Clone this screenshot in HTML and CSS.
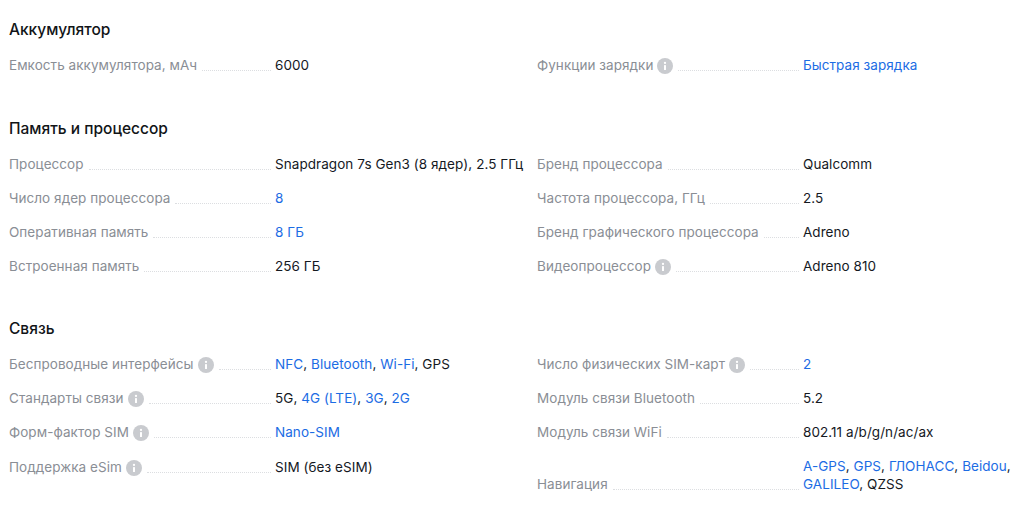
FILE: index.html
```html
<!DOCTYPE html>
<html lang="ru">
<head>
<meta charset="utf-8">
<title>Характеристики</title>
<link rel="stylesheet" href="styles.css">
</head>
<body>
<svg class="sprite" width="0" height="0" aria-hidden="true">
  <symbol id="info" viewBox="0 0 16 16">
    <circle cx="8" cy="8" r="8" fill="#c9cbcf"/>
    <rect x="7" y="7" width="2" height="5" rx=".6" fill="#fff"/>
    <circle cx="8" cy="4.9" r="1.15" fill="#fff"/>
  </symbol>
</svg>
<main class="specs">
  <section class="section section-first">
    <h2 class="title">Аккумулятор</h2>
    <div class="grid">
      <div class="row"><div class="key"><span>Емкость аккумулятора, мАч</span><i class="dots"></i></div><div class="val">6000</div></div>
      <div class="row"><div class="key"><span>Функции зарядки</span><svg class="ico"><use href="#info"/></svg><i class="dots"></i></div><div class="val"><a class="lnk">Быстрая зарядка</a></div></div>
    </div>
  </section>
  <section class="section">
    <h2 class="title">Память и процессор</h2>
    <div class="grid">
      <div class="row"><div class="key"><span>Процессор</span><i class="dots"></i></div><div class="val">Snapdragon 7s Gen3 (8 ядер), 2.5 ГГц</div></div>
      <div class="row"><div class="key"><span>Бренд процессора</span><i class="dots"></i></div><div class="val">Qualcomm</div></div>
      <div class="row"><div class="key"><span>Число ядер процессора</span><i class="dots"></i></div><div class="val"><a class="lnk">8</a></div></div>
      <div class="row"><div class="key"><span>Частота процессора, ГГц</span><i class="dots"></i></div><div class="val">2.5</div></div>
      <div class="row"><div class="key"><span>Оперативная память</span><i class="dots"></i></div><div class="val"><a class="lnk">8 ГБ</a></div></div>
      <div class="row"><div class="key"><span>Бренд графического процессора</span><i class="dots"></i></div><div class="val">Adreno</div></div>
      <div class="row"><div class="key"><span>Встроенная память</span><i class="dots"></i></div><div class="val">256 ГБ</div></div>
      <div class="row"><div class="key"><span>Видеопроцессор</span><svg class="ico"><use href="#info"/></svg><i class="dots"></i></div><div class="val">Adreno 810</div></div>
    </div>
  </section>
  <section class="section">
    <h2 class="title">Связь</h2>
    <div class="grid">
      <div class="row"><div class="key"><span>Беспроводные интерфейсы</span><svg class="ico"><use href="#info"/></svg><i class="dots"></i></div><div class="val"><a class="lnk">NFC</a>, <a class="lnk">Bluetooth</a>, <a class="lnk">Wi-Fi</a>, GPS</div></div>
      <div class="row"><div class="key"><span>Число физических SIM-карт</span><svg class="ico"><use href="#info"/></svg><i class="dots"></i></div><div class="val"><a class="lnk">2</a></div></div>
      <div class="row"><div class="key"><span>Стандарты связи</span><svg class="ico"><use href="#info"/></svg><i class="dots"></i></div><div class="val">5G, <a class="lnk">4G (LTE)</a>, <a class="lnk">3G</a>, <a class="lnk">2G</a></div></div>
      <div class="row"><div class="key"><span>Модуль связи Bluetooth</span><i class="dots"></i></div><div class="val">5.2</div></div>
      <div class="row"><div class="key"><span>Форм-фактор SIM</span><svg class="ico"><use href="#info"/></svg><i class="dots"></i></div><div class="val"><a class="lnk">Nano-SIM</a></div></div>
      <div class="row"><div class="key"><span>Модуль связи WiFi</span><i class="dots"></i></div><div class="val">802.11 a/b/g/n/ac/ax</div></div>
      <div class="row row-top"><div class="key"><span>Поддержка eSim</span><svg class="ico"><use href="#info"/></svg><i class="dots"></i></div><div class="val">SIM (без eSIM)</div></div>
      <div class="row"><div class="key"><span>Навигация</span><i class="dots"></i></div><div class="val"><a class="lnk">A-GPS</a>, <a class="lnk">GPS</a>, <a class="lnk">ГЛОНАСС</a>, <a class="lnk">Beidou</a>, <a class="lnk">GALILEO</a>, QZSS</div></div>
    </div>
  </section>
</main>
</body>
</html>
```
FILE: styles.css
```css
* { box-sizing: border-box; }
html, body { margin: 0; background: #fff; }
body {
  font-family: Inter, "Noto Sans", sans-serif;
  font-size: 13.5px;
  line-height: 18px;
  color: #15191f;
  overflow: hidden;
  height: 525px;
}
.sprite { position: absolute; }
.specs {
  width: 1021px;
  padding: 20px 0 0 9px;
  display: flex;
  flex-direction: column;
  gap: 44px;
}
.section-first { padding-bottom: 1px; }
.title {
  margin: 0 0 17px;
  font-size: 15.5px;
  line-height: 19px;
  font-weight: 500;
  color: #111417;
}
.grid {
  display: grid;
  grid-template-columns: 516px 484px;
  column-gap: 12px;
  row-gap: 16px;
}
.row {
  display: grid;
  grid-template-columns: 262px 1fr;
  column-gap: 4px;
  align-items: end;
}
.row-top { align-items: start; padding-top: 1px; }
.key {
  display: flex;
  align-items: flex-end;
  color: #8a8e95;
  letter-spacing: .05px;
  white-space: nowrap;
}
.ico {
  width: 16px;
  height: 16px;
  margin: 0 0 0 4px;
  flex: none;
}
.dots {
  flex: 1;
  min-width: 0;
  margin: 0 0 3px 5px;
  border-bottom: 1px dotted #dcdee1;
}
.val { letter-spacing: .06px; }
.lnk { color: #1c6ce4; }
```
